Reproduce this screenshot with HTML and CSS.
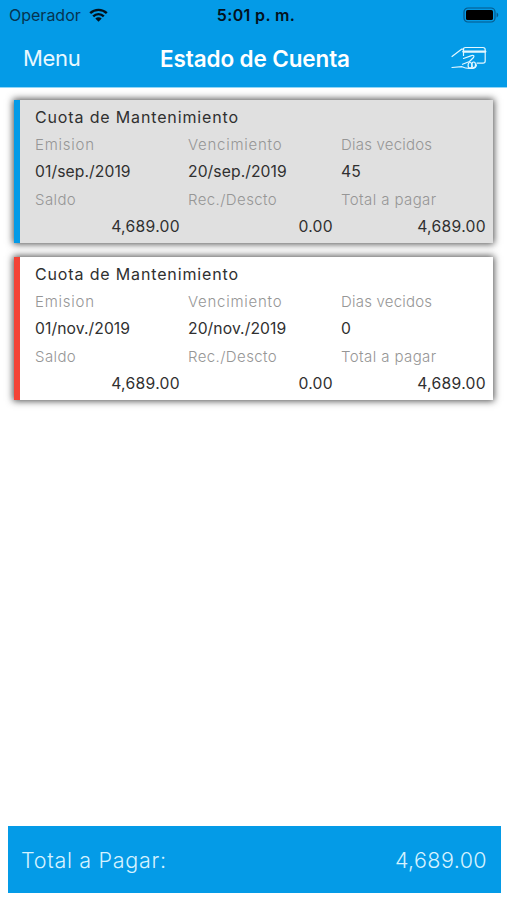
FILE: index.html
```
<!DOCTYPE html>
<html lang="es">
<head>
<meta charset="utf-8">
<meta name="viewport" content="width=device-width, initial-scale=1">
<title>Estado de Cuenta</title>
<link rel="stylesheet" href="styles.css">
</head>
<body>
<header class="header">
  <div class="status">
    <div class="carrier"><span class="carrier-name">Operador</span>
      <svg class="wifi" viewBox="0 0 19 14" width="19" height="14"><g fill="none" stroke="#03121d" stroke-width="2.4"><path d="M1.200 5.200C5.800.700 13.200.700 17.800 5.200"/><path d="M4.200 8.300C7.200 5.400 11.800 5.400 14.800 8.300"/></g><path d="M6.300 10.500C8.100 8.800 10.900 8.800 12.700 10.500L9.500 13.700Z" fill="#03121d"/></svg>
    </div>
    <span class="time">5:01 p. m.</span>
    <svg class="battery" viewBox="0 0 37 16" width="37" height="16"><rect x="1" y="1" width="31" height="14" rx="4" fill="none" stroke="#07598a" stroke-width="1.2"/><rect x="3" y="3" width="27" height="10" rx="1.6" fill="#000"/><path d="M33.600 5.600C35.800 6.400 35.800 9.600 33.600 10.400Z" fill="#07598a"/></svg>
  </div>
  <nav class="nav">
    <span class="menu">Menu</span>
    <h1 class="title">Estado de Cuenta</h1>
    <svg class="pay" viewBox="0 0 36 24" width="36" height="24" fill="none" stroke="#e4f7ff" stroke-width="1.2" stroke-linecap="round" stroke-linejoin="round"><path d="M12.500 9.500V3.500Q12.500 1.500 14.500 1.500H32Q34.200 1.500 34.200 3.700V15Q34.200 17.200 32 17.200H26"/><path d="M12.500 5.600H34.200" stroke-width="2.400"/><path d="M1 10.500L10.500 3.200H12.500M12.500 12.500L20.500 9.600Q24 8.800 22.500 11.500L18.500 15.500L11.500 18.300"/><path d="M1 21.500L11 20.700Q14.500 22.300 18 22.300H22Q25 22 25.500 18.800"/><ellipse cx="19" cy="19.300" rx="1.900" ry="2.800"/><ellipse cx="22.700" cy="18.800" rx="1.800" ry="2.800"/></svg>
  </nav>
</header>
<main class="list">
  <section class="card card-overdue">
    <h2 class="concept">Cuota de Mantenimiento</h2>
    <div class="grid">
      <span class="label wide">Emision</span><span class="label wide">Vencimiento</span><span class="label tight">Dias vecidos</span>
      <span class="date">01/sep./2019</span><span class="date">20/sep./2019</span><span class="date">45</span>
      <span class="label">Saldo</span><span class="label">Rec./Descto</span><span class="label">Total a pagar</span>
      <span class="amount">4,689.00</span><span class="amount">0.00</span><span class="amount">4,689.00</span>
    </div>
  </section>
  <section class="card card-current">
    <h2 class="concept">Cuota de Mantenimiento</h2>
    <div class="grid">
      <span class="label wide">Emision</span><span class="label wide">Vencimiento</span><span class="label tight">Dias vecidos</span>
      <span class="date">01/nov./2019</span><span class="date">20/nov./2019</span><span class="date">0</span>
      <span class="label">Saldo</span><span class="label">Rec./Descto</span><span class="label">Total a pagar</span>
      <span class="amount">4,689.00</span><span class="amount">0.00</span><span class="amount">4,689.00</span>
    </div>
  </section>
</main>
<footer class="total"><span class="total-label">Total a Pagar:</span><span class="total-value">4,689.00</span></footer>
</body>
</html>
```

FILE: styles.css
```
* { box-sizing: border-box; }
body {
  margin: 0;
  height: 900px;
  display: flex;
  flex-direction: column;
  background: #fff;
  font-family: Inter, "Liberation Sans", sans-serif;
  overflow: hidden;
}
.header { height: 88px; background: #049be7; border-bottom: 1px solid #91d6f7; }
.status {
  height: 30px;
  display: grid;
  grid-template-columns: 1fr auto 1fr;
  align-items: center;
  padding: 0 7px 0 9px;
  color: #03121d;
}
.carrier { display: flex; align-items: center; gap: 8px; font-size: 16px; color: #063451; }
.carrier-name { letter-spacing: 0; }
.time { font-size: 16px; font-weight: 600; letter-spacing: .35px; padding-left: 3px; }
.battery { justify-self: end; }
.nav {
  height: 56px;
  display: grid;
  grid-template-columns: 1fr auto 1fr;
  align-items: center;
  padding: 0 20px 0 23px;
  color: #fff;
}
.menu { font-size: 22px; letter-spacing: -.3px; color: #e8f8ff; }
.title { margin: 0; font-size: 22.500px; font-weight: 600; letter-spacing: -.12px; }
.pay { justify-self: end; }
.list { flex: 1; display: flex; flex-direction: column; gap: 14px; padding: 12px 14px; }
.card {
  height: 143px;
  border-left: 6px solid;
  padding: 4px 7px 0 15px;
  color: #303030;
  box-shadow: 0 0 7px 1px rgba(0, 0, 0, .7);
}
.card-overdue { background: #e0e0e0; border-color: #049be7; }
.card-current { background: #fff; border-color: #f44336; }
.concept { margin: 0; font-size: 16px; font-weight: 400; line-height: 27px; letter-spacing: .85px; }
.grid {
  display: grid;
  grid-template-columns: repeat(3, 1fr);
  grid-auto-rows: 27.300px;
  column-gap: 8px;
  align-items: center;
  font-size: 15.700px;
  line-height: 27px;
  white-space: nowrap;
}
.label { font-size: 15px; font-weight: 350; letter-spacing: .4px; color: #969696; }
.label.wide { letter-spacing: .75px; }
.label.tight { letter-spacing: .2px; }
.date { letter-spacing: .08px; }
.amount { text-align: right; letter-spacing: .3px; }
.total {
  height: 67px;
  margin: 0 6px 7px 8px;
  padding: 0 14px 0 13px;
  display: flex;
  align-items: center;
  justify-content: space-between;
  background: #049be7;
  color: #d5f2ff;
  font-size: 21.500px;
  font-weight: 300;
}
.total-label { letter-spacing: .7px; }
.total-value { letter-spacing: .4px; }
```
